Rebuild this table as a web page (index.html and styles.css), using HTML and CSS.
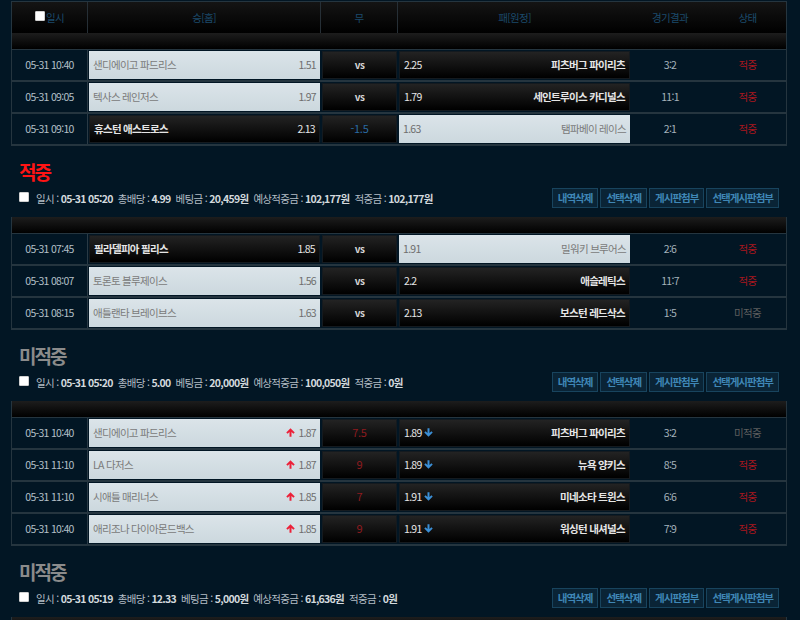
FILE: index.html
```html
<!DOCTYPE html>
<html lang="ko">
<head>
<meta charset="utf-8">
<title>베팅내역</title>
<link rel="stylesheet" href="styles.css">
</head>
<body>
<svg width="0" height="0" class="defs">
  <defs>
    <symbol id="up" viewBox="0 0 10 10"><path d="M5 0.3 L9.7 5 L8.2 6.5 L6.1 4.4 V9.7 H3.9 V4.4 L1.8 6.5 L0.3 5 Z"/></symbol>
    <symbol id="down" viewBox="0 0 10 10"><path d="M5 9.7 L9.7 5 L8.2 3.5 L6.1 5.6 V0.3 H3.9 V5.6 L1.8 3.5 L0.3 5 Z"/></symbol>
  </defs>
</svg>
<div class="page">

  <div class="tbl first">
    <div class="thead">
      <div class="h sep"><input type="checkbox" class="chk"><span>일시</span></div>
      <div class="h sep">승[홈]</div>
      <div class="h sep">무</div>
      <div class="h">패[원정]</div>
      <div class="h">경기결과</div>
      <div class="h">상태</div>
    </div>
    <div class="sub"></div>
    <div class="row">
      <div class="date">05-31 10:40</div>
      <div class="c"><div class="box light"><span class="team">샌디에이고 파드리스</span><span class="odd">1.51</span></div></div>
      <div class="c"><div class="box dark mid"><span class="vs">vs</span></div></div>
      <div class="c"><div class="box dark"><span class="odd">2.25</span><span class="team">피츠버그 파이리츠</span></div></div>
      <div class="res">3:2</div>
      <div class="st hit">적중</div>
    </div>
    <div class="row">
      <div class="date">05-31 09:05</div>
      <div class="c"><div class="box light"><span class="team">텍사스 레인저스</span><span class="odd">1.97</span></div></div>
      <div class="c"><div class="box dark mid"><span class="vs">vs</span></div></div>
      <div class="c"><div class="box dark"><span class="odd">1.79</span><span class="team">세인트루이스 카디널스</span></div></div>
      <div class="res">11:1</div>
      <div class="st hit">적중</div>
    </div>
    <div class="row">
      <div class="date">05-31 09:10</div>
      <div class="c"><div class="box dark"><span class="team">휴스턴 애스트로스</span><span class="odd">2.13</span></div></div>
      <div class="c"><div class="box dark mid"><span class="hc blue">-1.5</span></div></div>
      <div class="c"><div class="box light"><span class="odd">1.63</span><span class="team">탬파베이 레이스</span></div></div>
      <div class="res">2:1</div>
      <div class="st hit">적중</div>
    </div>
  </div>

  <div class="title red">적중</div>
  <div class="info">
    <div class="meta">
      <input type="checkbox" class="chk">
      <span class="it"><span class="lb">일시 :</span> <b>05-31 05:20</b></span>
      <span class="it"><span class="lb">총배당 :</span> <b>4.99</b></span>
      <span class="it"><span class="lb">베팅금 :</span> <b>20,459원</b></span>
      <span class="it"><span class="lb">예상적중금 :</span> <b>102,177원</b></span>
      <span class="it"><span class="lb">적중금 :</span> <b>102,177원</b></span>
    </div>
    <div class="btns"><span class="btn">내역삭제</span><span class="btn">선택삭제</span><span class="btn">게시판첨부</span><span class="btn">선택게시판첨부</span></div>
  </div>
  <div class="tbl">
    <div class="sub"></div>
    <div class="row">
      <div class="date">05-31 07:45</div>
      <div class="c"><div class="box dark"><span class="team">필라델피아 필리스</span><span class="odd">1.85</span></div></div>
      <div class="c"><div class="box dark mid"><span class="vs">vs</span></div></div>
      <div class="c"><div class="box light"><span class="odd">1.91</span><span class="team">밀워키 브루어스</span></div></div>
      <div class="res">2:6</div>
      <div class="st hit">적중</div>
    </div>
    <div class="row">
      <div class="date">05-31 08:07</div>
      <div class="c"><div class="box light"><span class="team">토론토 블루제이스</span><span class="odd">1.56</span></div></div>
      <div class="c"><div class="box dark mid"><span class="vs">vs</span></div></div>
      <div class="c"><div class="box dark"><span class="odd">2.2</span><span class="team">애슬레틱스</span></div></div>
      <div class="res">11:7</div>
      <div class="st hit">적중</div>
    </div>
    <div class="row">
      <div class="date">05-31 08:15</div>
      <div class="c"><div class="box light"><span class="team">애틀랜타 브레이브스</span><span class="odd">1.63</span></div></div>
      <div class="c"><div class="box dark mid"><span class="vs">vs</span></div></div>
      <div class="c"><div class="box dark"><span class="odd">2.13</span><span class="team">보스턴 레드삭스</span></div></div>
      <div class="res">1:5</div>
      <div class="st miss">미적중</div>
    </div>
  </div>

  <div class="title gray">미적중</div>
  <div class="info">
    <div class="meta">
      <input type="checkbox" class="chk">
      <span class="it"><span class="lb">일시 :</span> <b>05-31 05:20</b></span>
      <span class="it"><span class="lb">총배당 :</span> <b>5.00</b></span>
      <span class="it"><span class="lb">베팅금 :</span> <b>20,000원</b></span>
      <span class="it"><span class="lb">예상적중금 :</span> <b>100,050원</b></span>
      <span class="it"><span class="lb">적중금 :</span> <b>0원</b></span>
    </div>
    <div class="btns"><span class="btn">내역삭제</span><span class="btn">선택삭제</span><span class="btn">게시판첨부</span><span class="btn">선택게시판첨부</span></div>
  </div>
  <div class="tbl">
    <div class="sub"></div>
    <div class="row">
      <div class="date">05-31 10:40</div>
      <div class="c"><div class="box light"><span class="team">샌디에이고 파드리스</span><span class="odd"><svg class="ar up"><use href="#up"/></svg>1.87</span></div></div>
      <div class="c"><div class="box dark mid"><span class="hc redd">7.5</span></div></div>
      <div class="c"><div class="box dark"><span class="odd">1.89<svg class="ar dn"><use href="#down"/></svg></span><span class="team">피츠버그 파이리츠</span></div></div>
      <div class="res">3:2</div>
      <div class="st miss">미적중</div>
    </div>
    <div class="row">
      <div class="date">05-31 11:10</div>
      <div class="c"><div class="box light"><span class="team">LA 다저스</span><span class="odd"><svg class="ar up"><use href="#up"/></svg>1.87</span></div></div>
      <div class="c"><div class="box dark mid"><span class="hc redd">9</span></div></div>
      <div class="c"><div class="box dark"><span class="odd">1.89<svg class="ar dn"><use href="#down"/></svg></span><span class="team">뉴욕 양키스</span></div></div>
      <div class="res">8:5</div>
      <div class="st hit">적중</div>
    </div>
    <div class="row">
      <div class="date">05-31 11:10</div>
      <div class="c"><div class="box light"><span class="team">시애틀 매리너스</span><span class="odd"><svg class="ar up"><use href="#up"/></svg>1.85</span></div></div>
      <div class="c"><div class="box dark mid"><span class="hc redd">7</span></div></div>
      <div class="c"><div class="box dark"><span class="odd">1.91<svg class="ar dn"><use href="#down"/></svg></span><span class="team">미네소타 트윈스</span></div></div>
      <div class="res">6:6</div>
      <div class="st hit">적중</div>
    </div>
    <div class="row">
      <div class="date">05-31 10:40</div>
      <div class="c"><div class="box light"><span class="team">애리조나 다이아몬드백스</span><span class="odd"><svg class="ar up"><use href="#up"/></svg>1.85</span></div></div>
      <div class="c"><div class="box dark mid"><span class="hc redd">9</span></div></div>
      <div class="c"><div class="box dark"><span class="odd">1.91<svg class="ar dn"><use href="#down"/></svg></span><span class="team">워싱턴 내셔널스</span></div></div>
      <div class="res">7:9</div>
      <div class="st hit">적중</div>
    </div>
  </div>

  <div class="title gray">미적중</div>
  <div class="info">
    <div class="meta">
      <input type="checkbox" class="chk">
      <span class="it"><span class="lb">일시 :</span> <b>05-31 05:19</b></span>
      <span class="it"><span class="lb">총배당 :</span> <b>12.33</b></span>
      <span class="it"><span class="lb">베팅금 :</span> <b>5,000원</b></span>
      <span class="it"><span class="lb">예상적중금 :</span> <b>61,636원</b></span>
      <span class="it"><span class="lb">적중금 :</span> <b>0원</b></span>
    </div>
    <div class="btns"><span class="btn">내역삭제</span><span class="btn">선택삭제</span><span class="btn">게시판첨부</span><span class="btn">선택게시판첨부</span></div>
  </div>
  <div class="tbl">
    <div class="sub"></div>
  </div>

</div>
</body>
</html>
```

FILE: styles.css
```css
html, body {
  margin: 0;
  padding: 0;
  background: #021624;
}
body {
  font-family: "Noto Sans CJK KR", "Noto Sans", sans-serif;
  font-size: 10.5px;
  letter-spacing: -0.7px;
  overflow: hidden;
}
.defs { position: absolute; }
.page {
  padding: 1px 0 0 11px;
  width: 776px;
}

.tbl {
  width: 776px;
  box-sizing: border-box;
  border-left: 1px solid #25353f;
  border-right: 1px solid #25353f;
}
.tbl.first { border-top: 1px solid #25353f; }

.thead,
.row {
  display: grid;
  grid-template-columns: 76px 233px 77px 233px 78px 1fr;
}
.thead {
  height: 31px;
  background: linear-gradient(#141414, #000);
}
.thead .h {
  display: flex;
  align-items: center;
  justify-content: center;
  color: #1b4a6b;
  box-sizing: border-box;
}
.thead .h.sep { border-right: 1px solid #262f36; }

.chk {
  -webkit-appearance: none;
  appearance: none;
  width: 10px;
  height: 10px;
  margin: 0;
  background: #fff;
  border: 1px solid #d0d0d0;
  border-radius: 1px;
  box-sizing: border-box;
}
.thead .chk { margin: -3px 1px 0 0; }

.sub {
  height: 16px;
  background: linear-gradient(#1d1d1d, #000);
  border-bottom: 1px solid #25353f;
}

.row {
  border-bottom: 2px solid #25353f;
}
.date {
  display: flex;
  align-items: center;
  justify-content: center;
  color: #b4c0c8;
  border-right: 1px solid #2a3a45;
  box-sizing: border-box;
  padding-bottom: 1px;
}
.c {
  padding: 1px;
}
.box {
  height: 28px;
  box-sizing: border-box;
  display: flex;
  align-items: center;
  justify-content: space-between;
  padding: 0 4px 2px 4px;
}
.box.dark {
  background: linear-gradient(#232323, #000);
  border: 1px solid #141a1f;
  color: #e6e6e6;
}
.box.dark .team { font-weight: bold; }
.box.light {
  background: linear-gradient(#dbe4e9, #ccd8de);
  color: #7a7a7a;
}
.box.light .odd { color: #6e6e6e; }
.box.mid { justify-content: center; }
.vs {
  font-size: 10px;
  font-weight: bold;
  color: #d8d8d8;
  letter-spacing: -0.5px;
}
.hc { font-size: 11px; letter-spacing: -0.3px; }
.blue { color: #2a6ba3; }
.redd { color: #8e1b1f; }

.odd {
  display: flex;
  align-items: center;
}
.ar {
  width: 9px;
  height: 9px;
}
.ar.up { fill: #ec2038; margin-right: 3px; }
.ar.dn { fill: #3b8fd6; margin-left: 2px; }

.res,
.st {
  display: flex;
  align-items: center;
  justify-content: center;
  padding-bottom: 2px;
}
.res { color: #a5b2bb; }
.st.hit { color: #a8161e; }
.st.miss { color: #5e5e5e; }

.title {
  margin-top: 12px;
  height: 28px;
  line-height: 28px;
  padding-left: 8px;
  font-size: 19px;
  font-weight: bold;
  letter-spacing: -2px;
}
.title.red { color: #ff1414; }
.title.gray { color: #8b8b8b; }

.info {
  margin-top: 1px;
  height: 22px;
  display: flex;
  align-items: center;
  justify-content: space-between;
  padding: 0 8px;
}
.meta {
  display: flex;
  align-items: center;
  color: #c8d0d5;
}
.meta .chk { margin: -3px 7px 0 0; }
.meta .it { margin-right: 5px; }
.meta .lb { color: #b3bdc4; }
.meta b { color: #d3d9dd; }

.btns {
  display: flex;
  gap: 2px;
}
.btn {
  height: 20px;
  box-sizing: border-box;
  display: flex;
  align-items: center;
  padding: 0 5px 1px;
  background: #0a2436;
  border: 1px solid #18445e;
  color: #3f87b6;
  font-weight: bold;
  letter-spacing: -1px;
}
.info + .tbl { margin-top: 8px; }
```
